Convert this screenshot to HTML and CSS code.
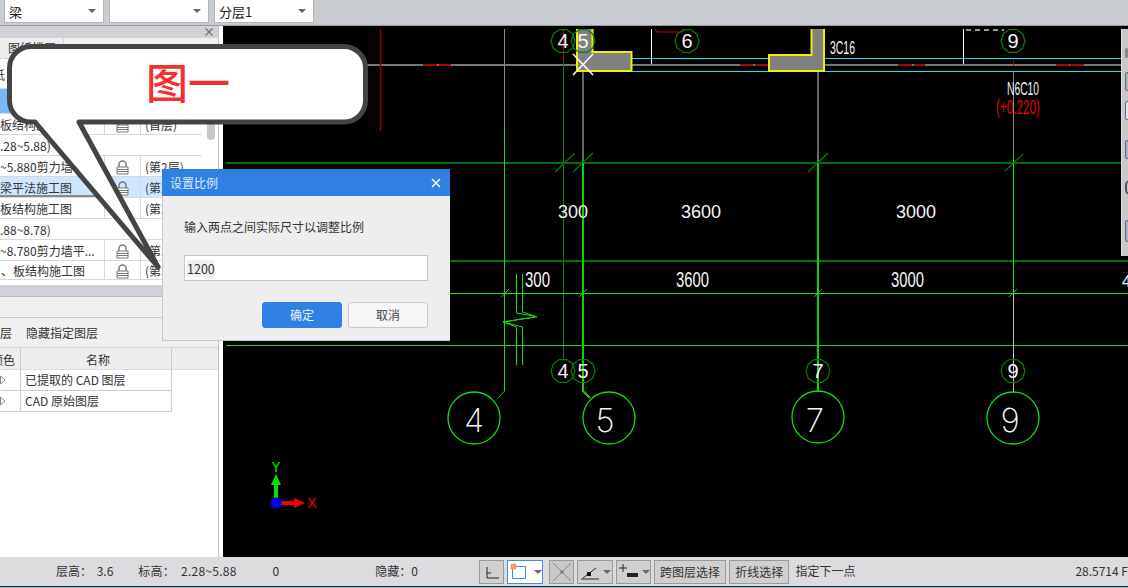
FILE: index.html
```html
<!DOCTYPE html>
<html lang="zh">
<head>
<meta charset="utf-8">
<title>设置比例</title>
<link rel="stylesheet" href="styles.css">
</head>
<body>
<svg class="defs" width="0" height="0" aria-hidden="true">
  <defs>
    <g id="lock">
      <path d="M3 7V4.500a3.500 3.500 0 0 1 7 0V7" fill="none" stroke="#777" stroke-width="1.400"/>
      <path d="M1 7h11v7H1z" fill="#fff" stroke="#777"/>
      <path d="M1 9.500h11M1 11.500h11" stroke="#777"/>
    </g>
    <polygon id="deca" points="12,0 9.700,7.050 3.700,11.400 -3.700,11.400 -9.700,7.050 -12,0 -9.700,-7.050 -3.700,-11.400 3.700,-11.400 9.700,-7.050" fill="none" stroke-width="1.200"/>
  </defs>
</svg>
<div class="app">
  <header class="toolbar">
    <div class="select"><span>梁</span><i class="caret"></i></div>
    <div class="select"><span></span><i class="caret"></i></div>
    <div class="select"><span>分层1</span><i class="caret"></i></div>
  </header>

  <main class="workspace">
    <aside class="panel">
      <div class="panel-head"><span class="panel-x">×</span></div>
      <div class="tabs"><div class="tab">图纸楼层</div></div>
      <div class="drawings">
        <div class="row row-tall"><span class="c-name"><b class="c-neg">纸</b></span></div>
        <div class="row row-active"><span class="c-name"></span></div>
        <div class="row"><span class="c-name">板结构施工图</span><span class="c-lock"><svg width="13" height="15"><use href="#lock"/></svg></span><span class="c-floor">(首层)</span></div>
        <div class="row"><span class="c-wide">.28~5.88)</span></div>
        <div class="row"><span class="c-name">~5.880剪力墙</span><span class="c-lock"><svg width="13" height="15"><use href="#lock"/></svg></span><span class="c-floor">(第2层)</span></div>
        <div class="row row-sel"><span class="c-name c-drag">梁平法施工图</span><span class="c-lock"><svg width="13" height="15"><use href="#lock"/></svg></span><span class="c-floor">(第2层)</span></div>
        <div class="row"><span class="c-name">板结构施工图</span><span class="c-lock"></span><span class="c-floor">(第2层)</span></div>
        <div class="row"><span class="c-wide">.88~8.78)</span></div>
        <div class="row"><span class="c-name">~8.780剪力墙平...</span><span class="c-lock"><svg width="13" height="15"><use href="#lock"/></svg></span><span class="c-floor">(第3层)</span></div>
        <div class="row row-last"><span class="c-name c-ind">、板结构施工图</span><span class="c-lock"><svg width="13" height="15"><use href="#lock"/></svg></span><span class="c-floor">(第3层)</span></div>
        <div class="scroll-thumb"></div>
      </div>
      <div class="splitter"></div>
      <div class="spacer"></div>
      <div class="layer-tools"><span>层</span><span class="hide-layer">隐藏指定图层</span></div>
      <div class="layer-head"><span class="l-color"><b>颜色</b></span><span class="l-name">名称</span></div>
      <div class="layer-row"><span class="l-color"><svg width="6" height="10"><path d="M0.500 1L5 5L0.500 9Z" fill="#fff" stroke="#888"/></svg></span><span class="l-name">已提取的 CAD 图层</span></div>
      <div class="layer-row"><span class="l-color"><svg width="6" height="10"><path d="M0.500 1L5 5L0.500 9Z" fill="#fff" stroke="#888"/></svg></span><span class="l-name">CAD 原始图层</span></div>
    </aside>
    <div class="gutter"></div>
    <section class="canvas">
      <svg class="cad" width="905" height="530" viewBox="223 26 905 530">
        <g fill="none">
          <path d="M365 65H1121" stroke="#777" stroke-width="2"/>
          <path d="M423 65h14M439 65h12M740 65h13M755 65h13M898 65h14M914 65h11M1056 65h13M1070 65h14" stroke="#b00000" stroke-width="2"/>
          <path d="M380.500 29V131" stroke="#8c0000" stroke-width="1.500"/>
          <path d="M504.500 29V130" stroke="#888"/>
          <path d="M563.500 29V62" stroke="#c00000"/>
          <path d="M563.500 62V359" stroke="#0a800a"/>
          <path d="M583 71V163M818 72V163" stroke="#666" stroke-width="2"/>
          <path d="M1013.500 72V155" stroke="#888"/>
          <path d="M1013.500 60V66" stroke="#c00000"/>
          <path d="M632 58.500H768M824 58.500H1121M632 71.500H768M824 71.500H1121" stroke="#19e6e6"/>
          <path d="M226 163H1121M450 261H1128" stroke="#006e00" stroke-width="2"/>
          <path d="M450 293.500H1128M226 345.500H1128" stroke="#1fdc1f"/>
          <path d="M504.500 130V391L498 398" stroke="#10e010"/>
          <path d="M583 163V391L590 398" stroke="#10d010" stroke-width="2"/>
          <path d="M818 163V392" stroke="#10d010" stroke-width="2"/>
          <path d="M1013.500 155V293" stroke="#20e020"/>
          <path d="M1013.500 293V392" stroke="#bbb"/>
          <path d="M555 172L575 153M573 172L593 153M808 172L828 153M1005 171L1023 154" stroke="#008000" stroke-width="1.200"/>
          <path d="M501 297L509 289M579 297L587 289M814 297L822 289M1009 297L1017 289" stroke="#10d010"/>
          <path d="M516.500 274V313L536.700 316.700L503 322L516.500 327V365M522.500 274V312L536.700 316.700L503 322L522.500 327V365" stroke="#10e010"/>
          <circle cx="474" cy="418" r="26" stroke="#10e010" stroke-width="1.300"/>
          <circle cx="609" cy="418" r="26" stroke="#10e010" stroke-width="1.300"/>
          <circle cx="818" cy="417" r="26" stroke="#10e010" stroke-width="1.300"/>
          <circle cx="1013" cy="418" r="26" stroke="#10e010" stroke-width="1.300"/>
          <path d="M651.500 29V64M963.500 29V64" stroke="#fff"/>
          <path d="M655 29l2 3h26l2-3" stroke="#c00000"/>
          <path d="M966 30h38" stroke="#ccc" stroke-dasharray="5 4" stroke-width="1.500"/>
        </g>
        <polygon points="577,29 592.500,29 592.500,52 631.500,52 631.500,71 577,71" fill="#808080"/>
        <path d="M577 29V71H631.500V52H592.500V29" fill="none" stroke="#f0f000" stroke-width="2"/>
        <polygon points="769,55 811.500,55 811.500,29 824,29 824,71 769,71" fill="#808080"/>
        <path d="M811.500 29V55H769V71H824V29" fill="none" stroke="#f0f000" stroke-width="2"/>
        <path d="M573 54L593 75M593 54L573 75" stroke="#fff" stroke-width="1.500"/>
        <g stroke="#0a7a0a">
          <use href="#deca" x="563" y="41"/>
          <use href="#deca" x="583" y="41"/>
          <use href="#deca" x="687" y="41"/>
          <use href="#deca" x="1013" y="41"/>
          <use href="#deca" x="563" y="371"/>
          <use href="#deca" x="583" y="371"/>
          <use href="#deca" x="818" y="371"/>
          <use href="#deca" x="1013" y="371"/>
        </g>
        <g class="cad-text">
          <text x="563" y="48" class="mid f20">4</text>
          <text x="583" y="48" class="mid f20">5</text>
          <text x="687" y="48" class="mid f20">6</text>
          <text x="1013" y="48" class="mid f20">9</text>
          <text x="563" y="378" class="mid f20">4</text>
          <text x="583" y="378" class="mid f20">5</text>
          <text x="818" y="378" class="mid f20">7</text>
          <text x="1013" y="378" class="mid f20">9</text>
          <text x="474" y="432" class="mid big">4</text>
          <text x="605" y="432" class="mid big">5</text>
          <text x="815" y="432" class="mid big">7</text>
          <text x="1010" y="432" class="mid big">9</text>
          <text x="558" y="218" class="f18">300</text>
          <text x="681" y="218" class="f18">3600</text>
          <text x="896" y="218" class="f18">3000</text>
          <text x="525" y="287" class="f22" textLength="25" lengthAdjust="spacingAndGlyphs">300</text>
          <text x="676" y="287" class="f22" textLength="33" lengthAdjust="spacingAndGlyphs">3600</text>
          <text x="891" y="287" class="f22" textLength="33" lengthAdjust="spacingAndGlyphs">3000</text>
          <text x="830" y="54" class="f18" textLength="25" lengthAdjust="spacingAndGlyphs">3C16</text>
          <text x="1007" y="95" class="f18" textLength="32" lengthAdjust="spacingAndGlyphs">N6C10</text>
          <text x="996" y="114" class="f20 red" textLength="44" lengthAdjust="spacingAndGlyphs">(+0.220)</text>
          <text x="1122" y="287" class="f16">4</text>
        </g>
        <g>
          <text x="276" y="472" class="axis y">Y</text>
          <path d="M274 485h4v16h-4z" fill="#00e000"/>
          <path d="M276 474L281 485H271Z" fill="#00e000"/>
          <path d="M280 501h14v-3l11 5l-11 5v-3h-14z" fill="#f00000"/>
          <circle cx="276" cy="503" r="5.500" fill="#0000e6"/>
          <text x="312" y="508" class="axis x">X</text>
        </g>
      </svg>
      <div class="side-tools">
        <i class="st st-tri"></i>
        <i class="st st-a"></i>
        <i class="st st-b"></i>
        <i class="st st-c"></i>
        <i class="st st-d"></i>
        <i class="st st-e"></i>
      </div>
    </section>
  </main>

  <footer class="status">
    <span class="s-a">层高： 3.6</span>
    <span class="s-b">标高： 2.28~5.88</span>
    <span class="s-c">0</span>
    <span class="s-d">隐藏：0</span>
    <button class="btn btn-icon s-first"><svg width="23" height="22"><path d="M7 6V17H19M7 12H11" fill="none" stroke="#222"/></svg></button>
    <button class="btn btn-on"><svg width="22" height="22"><path d="M4.500 5.500h13v12h-13z" fill="#fff" stroke="#3d8fe0"/><path d="M3 3h5v5H3z" fill="#f5a35c" stroke="#e08a40" stroke-width=".5"/></svg><i class="caret"></i></button>
    <button class="btn btn-icon btn-off"><svg width="23" height="22"><path d="M3 2L21 20M21 2L3 20" stroke="#888"/><rect x="10.500" y="9.500" width="3" height="3" fill="#777"/></svg></button>
    <button class="btn btn-wide"><svg width="22" height="22"><path d="M3 18H21M5 17L18 7" fill="none" stroke="#222"/><rect x="9" y="11" width="4" height="4" fill="#111"/></svg><i class="caret"></i></button>
    <button class="btn btn-wide"><svg width="22" height="22"><path d="M2 7H10M6 3V11" fill="none" stroke="#222"/><rect x="10" y="12" width="11" height="4" fill="#222"/></svg><i class="caret"></i></button>
    <button class="btn btn-text btn-t1">跨图层选择</button>
    <button class="btn btn-text btn-t2">折线选择</button>
    <span class="s-hint">指定下一点</span>
    <span class="s-scale">28.5714 F</span>
  </footer>
  <div class="strip"></div>
</div>

<section class="dialog">
  <div class="dialog-title"><span>设置比例</span><svg width="10" height="10"><path d="M1 1L9 9M9 1L1 9" stroke="#fff" stroke-width="1.500"/></svg></div>
  <div class="dialog-body">
    <p class="dialog-msg">输入两点之间实际尺寸以调整比例</p>
    <div class="dialog-input"><span>1200</span></div>
    <div class="dialog-actions">
      <button class="dbtn dbtn-ok">确定</button>
      <button class="dbtn">取消</button>
    </div>
  </div>
</section>

<svg class="callout" width="376" height="290" viewBox="0 0 376 290">
  <path d="M31 46.500H344A21.500 21.500 0 0 1 365.500 68V100.500A21.500 21.500 0 0 1 344 122H79L158 267L35 122H31A21.500 21.500 0 0 1 9.500 100.500V68A21.500 21.500 0 0 1 31 46.500Z" fill="#fff" stroke="#444" stroke-width="5" stroke-linejoin="round"/>
  <text x="188" y="99" class="callout-text">图一</text>
</svg>
</body>
</html>
```

FILE: styles.css
```css
* { box-sizing: border-box; }
html, body { margin: 0; padding: 0; }
body {
  width: 1128px;
  height: 588px;
  overflow: hidden;
  position: relative;
  background: #dcdcde;
  color: #333;
  font: 12px/1 "Noto Sans CJK SC", "Liberation Sans", sans-serif;
}
.defs { position: absolute; }
.app { display: flex; flex-direction: column; height: 588px; }

/* top toolbar */
.toolbar {
  height: 26px;
  flex: none;
  display: flex;
  gap: 5px;
  padding-left: 4px;
  background: #c9ccd1;
  border-bottom: 1px solid #999;
}
.select {
  width: 100px;
  height: 23px;
  background: #fff;
  border: 1px solid #b4b4b4;
  border-top: 0;
  display: flex;
  align-items: center;
  justify-content: space-between;
  padding: 0 7px 0 4px;
  font-size: 13px;
  color: #222;
}
.caret {
  width: 0;
  height: 0;
  border: 4px solid transparent;
  border-top-color: #666;
  border-bottom: 0;
  display: block;
}

/* layout */
.workspace { flex: 1; display: flex; min-height: 0; }
.panel {
  width: 219px;
  flex: none;
  background: #fff;
  border-right: 1px solid #bbb;
  display: flex;
  flex-direction: column;
  overflow: hidden;
}
.gutter { width: 4px; flex: none; background: #fff; }
.canvas { flex: 1; position: relative; background: #000; overflow: hidden; }
.cad { display: block; }

/* panel */
.panel-head {
  height: 12px;
  background: #d0d2d8;
  display: flex;
  justify-content: flex-end;
  align-items: center;
  padding-right: 3px;
}
.panel-x { color: #777; font-size: 12px; font-weight: 700; }
.tabs { height: 21px; background: #f0f0f0; border-bottom: 1px solid #d8d8d8; }
.tab { width: 64px; height: 20px; padding: 4px 0 0 8px; background: #eee; border-right: 1px solid #d4d4d4; color: #333; white-space: nowrap; overflow: hidden; }
.drawings { position: relative; height: 221px; flex: none; background: #fff; }
.row {
  width: 202px;
  height: 21px;
  display: flex;
  border-bottom: 1px solid #d8d8d8;
  background: #fff;
  align-items: stretch;
  white-space: nowrap;
}
.row-tall { height: 30px; }
.row-active { height: 25px; background: #7ab8f5; }
.row-sel { background: #cfe6ff; }
.row-last { height: 19px; }
.row span { display: flex; align-items: center; overflow: hidden; padding-top: 2px; }
.c-name { width: 105px; border-right: 1px solid #d8d8d8; flex: none; }
.c-neg { font-weight: 400; margin-left: -7px; }
.row .c-ind { padding-left: 1px; padding-top: 2px; }
.c-lock { width: 36px; flex: none; border-right: 1px solid #d8d8d8; justify-content: center; }
.c-floor { flex: 1; padding-left: 4px; }
.c-wide { flex: 1; }
.c-drag { box-shadow: inset 0 -2px 0 #888; }
.scroll-thumb { position: absolute; right: 3px; top: 59px; width: 8px; height: 22px; border-radius: 4px; background: #c8c8c8; }
.splitter { height: 12px; margin-top: 5px; background: #d0d2d8; border-bottom: 1px solid #bbb; flex: none; }
.spacer { height: 21px; background: #f0f0f0; border-bottom: 1px solid #ccc; flex: none; }
.layer-tools { height: 30px; background: #f0f0f0; display: flex; align-items: center; gap: 14px; border-bottom: 1px solid #d4d4d4; flex: none; }
.hide-layer { color: #333; }
.layer-head { height: 22px; padding-top: 0; background: #eee; display: flex; flex: none; border-bottom: 1px solid #ddd; }
.layer-head .l-name { border-right: 1px solid #ccc; border-bottom: 0; padding-top: 2px; }
.l-color { width: 21px; flex: none; border-right: 1px solid #ccc; display: flex; align-items: center; overflow: hidden; }
.l-color b { font-weight: 400; margin-left: -9px; white-space: nowrap; padding-top: 2px; }
.layer-head .l-name { justify-content: center; }
.l-name { width: 151px; display: flex; align-items: center; padding-left: 4px; border-right: 1px solid #ccc; }
.layer-row { width: 172px; height: 21px; display: flex; border-bottom: 1px solid #ccc; }

/* right tool strip */
.side-tools {
  position: absolute;
  left: 898px;
  top: 3px;
  width: 7px;
  height: 227px;
  background: #c8c8c8;
  border-left: 1px solid #ddd;
  overflow: hidden;
}
.st { position: absolute; left: 3px; width: 10px; background: #a8b4c6; border: 1px solid #667; border-radius: 2px; }
.st-tri { top: 19px; height: 10px; width: 3px; left: 3px; background: #888; border: 0; }
.st-a { top: 43px; height: 19px; }
.st-b { top: 72px; height: 19px; background: #d8e8ff; }
.st-c { top: 111px; height: 19px; }
.st-d { top: 151px; height: 15px; background: transparent; border: 2px solid #556; border-radius: 8px; }
.st-e { top: 191px; height: 22px; }

/* status bar */
.status {
  height: 30px;
  flex: none;
  background: #dcdcde;
  display: flex;
  align-items: center;
  padding-bottom: 2px;
  position: relative;
  color: #333;
  white-space: nowrap;
  overflow: hidden;
}
.s-a { margin-left: 56px; word-spacing: 2px; }
.s-b { margin-left: 25px; word-spacing: 3px; letter-spacing: .25px; }
.s-c { margin-left: 36px; }
.s-d { margin-left: 96px; }
.btn {
  height: 24px;
  margin-top: 2px;
  padding: 0;
  background: #d0d0d0;
  border: 1px solid #999;
  margin-left: 3px;
  font: inherit;
  color: #333;
  display: flex;
  align-items: center;
}
.btn-icon { width: 25px; }
.btn.s-first { margin-left: 61px; }
.btn-on { width: 36px; background: #fff; border-color: #3d8fe0; margin-left: 3px; }
.btn-on .caret { margin-left: 4px; }
.btn.btn-off { margin-left: 6px; background: #c8c8c8; }
.btn-wide { width: 36px; }
.btn-wide .caret { margin-left: 3px; }
.btn-text { justify-content: center; }
.btn-t1 { width: 73px; }
.btn-t2 { width: 61px; }
.s-hint { margin-left: 6px; }
.s-scale { margin-left: 220px; }
.strip { height: 2px; flex: none; background: #9cc0d8; border-top: 1px solid #222; margin-top: -1px; position: relative; }

/* cad text */
.cad-text text { fill: #f4f4f4; font-family: "Liberation Sans", sans-serif; }
.cad-text .red { fill: #e60000; }
.cad-text .mid { text-anchor: middle; }
.f16 { font-size: 16px; }
.f18 { font-size: 18px; }
.f20 { font-size: 20px; }
.f22 { font-size: 22px; }
.cad-text .big { font-family: Inter, "Liberation Sans", sans-serif; font-size: 33px; font-weight: 200; }
.axis { font: 14px "DejaVu Sans", sans-serif; text-anchor: middle; }
.axis.y { fill: #00e000; }
.axis.x { fill: #f00000; }

/* dialog */
.dialog {
  position: absolute;
  left: 162px;
  top: 169px;
  width: 288px;
  height: 172px;
  background: #eee;
  border: 1px solid #c0c8d4;
  border-top: 0;
  border-right: 0;
  z-index: 3;
}
.dialog-title {
  height: 27px;
  background: #2f80e0;
  color: #dfeafa;
  display: flex;
  align-items: center;
  justify-content: space-between;
  padding: 0 9px 0 8px;
  margin-left: -1px;
}
.dialog-body { padding: 24px 22px 0 21px; }
.dialog-msg { margin: 0 0 21px; line-height: 14px; color: #333; }
.dialog-input { height: 26px; background: #fff; border: 1px solid #c4c8d0; padding: 4px 2px; }
.dialog-input span { display: inline-block; height: 17px; line-height: 17px; background: #f0f0f0; font-size: 12.500px; color: #333; }
.dialog-actions { display: flex; justify-content: flex-end; gap: 6px; margin-top: 21px; }
.dbtn { width: 80px; height: 26px; padding: 0; border: 1px solid #c4c8d4; border-radius: 3px; background: #f6f6f8; font: inherit; color: #444; }
.dbtn-ok { background: #2f80e0; border-color: #2f80e0; color: #e8f0fc; }

/* callout */
.callout { position: absolute; left: 0; top: 0; z-index: 2; }
.callout-text { fill: #f53030; font: 500 42px "Noto Sans CJK SC", sans-serif; text-anchor: middle; }
```
